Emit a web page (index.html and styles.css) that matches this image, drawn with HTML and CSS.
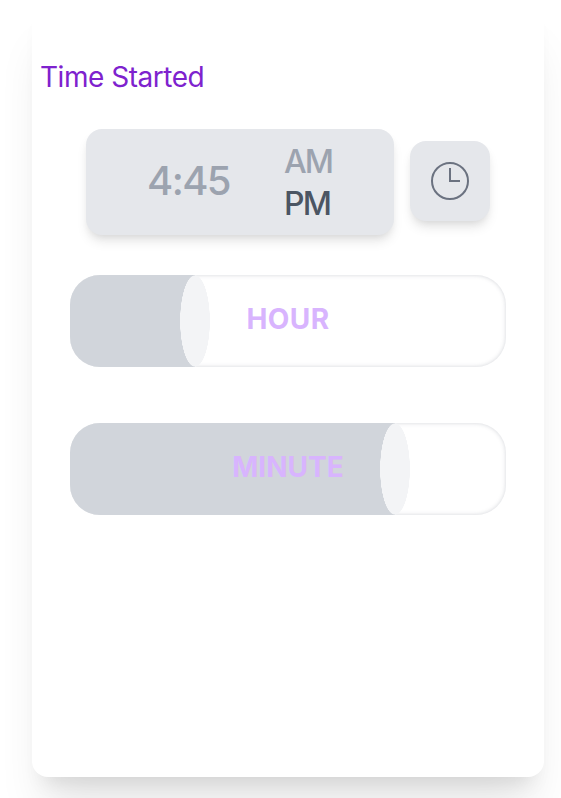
FILE: index.html
```html
<!DOCTYPE html>
<html lang="en">
<head>
<meta charset="utf-8">
<title>Time Started</title>
<link rel="stylesheet" href="styles.css">
</head>
<body>
<main class="card">
  <h1 class="title">Time Started</h1>
  <div class="clock-row">
    <div class="display">
      <span class="time">4:45</span>
      <div class="period">
        <span>AM</span>
        <span class="active">PM</span>
      </div>
    </div>
    <button class="now" aria-label="Now">
      <svg width="40" height="40" viewBox="0 0 40 40" fill="none" stroke="#6b7280" stroke-width="2">
        <circle cx="20" cy="20" r="18"/>
        <path d="M20 7V20H30"/>
      </svg>
    </button>
  </div>
  <div class="slider hour">
    <div class="fill"></div>
    <span class="label">HOUR</span>
  </div>
  <div class="slider minute">
    <div class="fill"></div>
    <span class="label">MINUTE</span>
  </div>
</main>
</body>
</html>
```
FILE: styles.css
```css
* { box-sizing: border-box; }
html { overflow: hidden; }
body {
  margin: 0;
  height: 798px;
  overflow: hidden;
  background: #fff;
  font-family: Inter, "Liberation Sans", sans-serif;
}
.card {
  width: 512px;
  height: 777px;
  margin-left: 32px;
  padding: 57px 38px 0;
  border-radius: 16px;
  background: #fff;
  box-shadow: 0 40px 46px -12px rgba(0, 0, 0, .1), 0 16px 20px -12px rgba(0, 0, 0, .1);
}
.title {
  margin: 0 0 0 -30px;
  font-size: 28px;
  line-height: 40px;
  font-weight: 400;
  letter-spacing: -.48px;
  color: #7e22ce;
}
.clock-row {
  display: flex;
  align-items: flex-start;
  gap: 16px;
  margin: 32px 0 0 16px;
  height: 106px;
}
.display {
  display: flex;
  align-items: center;
  width: 308px;
  height: 106px;
  padding-left: 61px;
  border-radius: 16px;
  background: #e5e7eb;
  color: #9ca3af;
  box-shadow: 0 8px 12px -2px rgba(0, 0, 0, .1), 0 4px 8px -4px rgba(0, 0, 0, .1);
}
.time {
  width: 136px;
  padding-bottom: 3px;
  font-size: 40px;
  line-height: 56px;
  font-weight: 500;
  letter-spacing: -1.6px;
}
.period {
  display: flex;
  flex-direction: column;
  padding: 2px 0 0 1px;
  font-size: 32px;
  line-height: 42px;
  font-weight: 500;
  letter-spacing: -2px;
}
.period .active { letter-spacing: -1.8px; color: #4b5563; }
.now {
  display: grid;
  place-items: center;
  width: 80px;
  height: 80px;
  margin-top: 12px;
  padding: 0;
  border: 0;
  border-radius: 16px;
  background: #e5e7eb;
  box-shadow: 0 8px 12px -2px rgba(0, 0, 0, .1), 0 4px 8px -4px rgba(0, 0, 0, .1);
}
.slider {
  position: relative;
  width: 436px;
  height: 92px;
  border-radius: 30px;
  overflow: hidden;
  box-shadow: inset 0 0 4px rgba(107, 114, 128, .3);
}
.hour { margin-top: 40px; }
.minute { margin-top: 56px; }
.fill {
  height: 100%;
  background: radial-gradient(15px 46px at calc(100% - 15px) 50%, #f3f4f6 98%, transparent 100%), linear-gradient(#d1d5db, #d1d5db) 0 0 / calc(100% - 15px) 100% no-repeat;
}
.hour .fill { width: 140px; }
.minute .fill { width: 340px; }
.label {
  position: absolute;
  inset: 0;
  display: grid;
  place-items: center;
  padding-bottom: 4px;
  font-size: 28px;
  line-height: 40px;
  font-weight: 700;
  color: #d8b4fe;
}
.hour .label { letter-spacing: .4px; }
```
